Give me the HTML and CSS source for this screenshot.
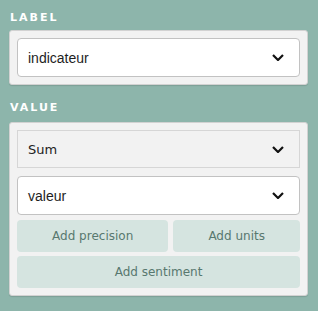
FILE: index.html
```html
<!DOCTYPE html>
<html>
<head>
    <title>Widget settings</title>
    <link rel="stylesheet" href="styles.css">
</head>
<body>
    <div class="section">
        <div class="section-title">Label</div>
        <div class="panel">
            <div class="select">
                <span>indicateur</span>
                <svg class="chevron" viewBox="0 0 12 7"><path d="M1 1 L6 6 L11 1"/></svg>
            </div>
        </div>
    </div>

    <div class="section">
        <div class="section-title">Value</div>
        <div class="panel">
            <div class="select select-agg">
                <span>Sum</span>
                <svg class="chevron" viewBox="0 0 12 7"><path d="M1 1 L6 6 L11 1"/></svg>
            </div>
            <div class="select select-field">
                <span>valeur</span>
                <svg class="chevron" viewBox="0 0 12 7"><path d="M1 1 L6 6 L11 1"/></svg>
            </div>
            <div class="actions">
                <button>Add precision</button>
                <button>Add units</button>
                <button class="wide">Add sentiment</button>
            </div>
        </div>
    </div>
</body>
</html>
```
FILE: styles.css
```css
:root {
    --background: #8db5ab;
    --panel: #f2f2f2;
    --button: #d5e4e0;
    --button-text: #58786f;
    --text: #1e1e1e;
}

body {
    margin: 0;
    padding: 11px 10px 0 9px;
    background: var(--background);
    font-family: 'Liberation Sans', Arial, sans-serif;
}

.section {
    margin-bottom: 16px;
}

.section-title {
    color: white;
    font-family: 'DejaVu Sans', sans-serif;
    font-size: 11px;
    font-weight: 600;
    line-height: 14px;
    letter-spacing: 2px;
    text-transform: uppercase;
    padding-left: 1px;
    margin-bottom: 5px;
}

.section + .section .section-title {
    margin-bottom: 7px;
}

.panel {
    background: var(--panel);
    border: 1px solid #d2d2d2;
    border-radius: 3px;
    box-shadow: 0 1px 1px rgba(0,0,0,0.12);
    padding: 7px;
}

.select {
    height: 37px;
    display: flex;
    align-items: center;
    justify-content: space-between;
    background: white;
    border: 1px solid #c2c2c2;
    border-radius: 4px;
    padding: 0 15px 0 10px;
    font-size: 14px;
    color: var(--text);
}

.select-agg {
    height: 36px;
    background: var(--panel);
    border-color: #d6d6d6;
    border-radius: 0;
    font-family: 'DejaVu Sans', sans-serif;
    font-size: 13px;
    color: #222;
    margin-bottom: 8px;
}

.select-field {
    margin-bottom: 5px;
}

.chevron {
    width: 12px;
    height: 7px;
    fill: none;
    stroke: #111;
    stroke-width: 2.2;
}

.actions {
    display: flex;
    flex-wrap: wrap;
    gap: 4px 5px;
}

.actions button {
    flex: 1 1 auto;
    height: 32px;
    padding: 0;
    border: none;
    border-radius: 4px;
    background: var(--button);
    color: var(--button-text);
    font-family: 'DejaVu Sans', sans-serif;
    font-size: 12px;
    cursor: pointer;
}

.actions .wide {
    flex-basis: 100%;
}
```
